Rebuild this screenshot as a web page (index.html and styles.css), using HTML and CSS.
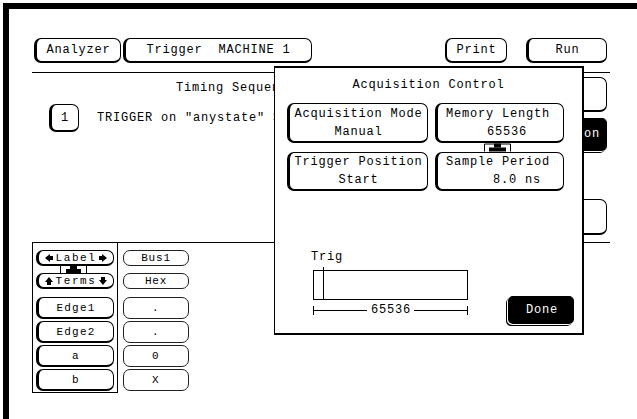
FILE: index.html
```html
<!DOCTYPE html>
<html lang="en">
<head>
    <meta charset="UTF-8">
    <title>Trigger MACHINE 1 - Acquisition Control</title>
    <link rel="stylesheet" href="styles.css">
</head>
<body>
<div class="screen">
    <div class="topbar">
        <div class="key w-analyzer">Analyzer</div>
        <div class="key w-machine">Trigger&nbsp; MACHINE 1</div>
        <div class="key w-print">Print</div>
        <div class="key w-run">Run</div>
    </div>
    <div class="rule"></div>

    <div class="middle">
        <div class="seq">
            <div class="seq-title">Timing Sequence Specification</div>
            <div class="seq-row">
                <div class="key w-level">1</div>
                <span class="seq-text">TRIGGER on "anystate" &gt;</span>
            </div>
        </div>
        <div class="side">
            <div class="key side-a"></div>
            <div class="key dark side-b">Acquisition</div>
            <div class="key side-c"></div>
        </div>
    </div>
    <div class="rule rule-low"></div>

    <div class="bottom">
        <div class="labels">
            <div class="key small wide"><svg class="arr" viewBox="0 0 8 8"><path d="M0 4 L5 0 L5 2 L8 2 L8 6 L5 6 L5 8 Z"/></svg>Label<svg class="arr" viewBox="0 0 8 8"><path d="M8 4 L3 0 L3 2 L0 2 L0 6 L3 6 L3 8 Z"/></svg></div>
            <div class="key small wide mt7"><svg class="arr" viewBox="0 0 8 8"><path d="M4 0 L8 5 L6 5 L6 8 L2 8 L2 5 L0 5 Z"/></svg>Terms<svg class="arr" viewBox="0 0 8 8"><path d="M4 8 L8 3 L6 3 L6 0 L2 0 L2 3 L0 3 Z"/></svg></div>
            <div class="key cell mt8">Edge1</div>
            <div class="key cell">Edge2</div>
            <div class="key cell">a</div>
            <div class="key cell">b</div>
            <svg class="knob knob-label" viewBox="0 0 27 8"><path class="knob-frame" d="M0.5 8 V0.5 H26.5 V8"/><rect x="10" y="1" width="7" height="3"/><rect x="6" y="4" width="15" height="4"/></svg>
        </div>
        <div class="values">
            <div class="key flat small">Bus1</div>
            <div class="key flat small mt7">Hex</div>
            <div class="key flat cell mt8">.</div>
            <div class="key flat cell">.</div>
            <div class="key flat cell">0</div>
            <div class="key flat cell">X</div>
        </div>
    </div>

    <!-- menu opened over the trigger screen -->
    <div class="dialog">
        <div class="dlg-title">Acquisition Control</div>
        <div class="dlg-grid">
            <div class="key pair">
                <span>Acquisition Mode</span>
                <span>Manual</span>
            </div>
            <div class="key pair right">
                <span>Memory Length</span>
                <span class="v-mem">65536</span>
            </div>
            <div class="key pair">
                <span>Trigger Position</span>
                <span>Start</span>
            </div>
            <div class="key pair right">
                <span>Sample Period</span>
                <span class="v-sample">8.0 ns</span>
            </div>
            <svg class="knob knob-mem" viewBox="0 0 27 10"><path class="knob-frame" d="M0.5 10 V2.5 H26.5 V10"/><rect x="10" y="2" width="7" height="4"/><rect x="5" y="6" width="17" height="4"/></svg>
        </div>
        <div class="dlg-bottom">
            <div class="trig">
                <div class="trig-label">Trig</div>
                <div class="trig-bar"><div class="trig-mark"></div></div>
                <div class="dim">
                    <div class="dim-line"></div>
                    <span class="dim-text">65536</span>
                    <div class="dim-line"></div>
                </div>
            </div>
            <div class="key dark done">Done</div>
        </div>
    </div>
</div>
</body>
</html>
```

FILE: styles.css
```css
*{margin: 0;padding: 0;box-sizing: border-box;}
body{background: #fff;color: #000;font-family: "Liberation Mono", "DejaVu Sans Mono", monospace;font-size: 12px;letter-spacing: 0.8px;}

.screen{position: relative;width: 634px;height: 416px;margin: 3px 0 0 3px;border-top: 6px solid #000;border-left: 6px solid #000;overflow: hidden;}

/* soft keys */
.key{display: flex;align-items: center;justify-content: center;background: #fff;border: 1px solid #000;border-left-width: 3px;border-bottom-width: 2px;border-radius: 7px;white-space: pre;line-height: 14px;}
.key.flat{border-width: 1px;border-color: #222;}
.key.dark{background: #000;color: #fff;border-radius: 5px;box-shadow: -1px 1px 0 #fff, -2px 2px 0 #000;}

.topbar{display: flex;margin: 29px 0 0 25px;width: 573px;height: 25px;}
.topbar .key{height: 25px;}
.w-analyzer{width: 87px;}
.w-machine{width: 189px;margin-left: 2px;}
.w-print{width: 62px;margin-left: auto;border-left-width: 2px;}
.w-run{width: 81px;margin-left: 19px;}

.rule{margin: 9px 0 0 23px;width: 578px;border-top: 1px solid #000;}
.rule-low{margin-top: 0;}

.middle{display: flex;height: 169px;}
.seq{flex: 1;white-space: nowrap;}
.seq-title{margin-top: 8px;padding-left: 167px;line-height: 14px;}
.seq-row{display: flex;align-items: center;margin: 9px 0 0 40px;}
.w-level{flex: none;width: 30px;height: 28px;}
.seq-text{margin-left: 18px;}

.side{display: flex;flex-direction: column;width: 102px;margin-right: 30px;padding-top: 4px;}
.side-a{height: 35px;}
.side-b{height: 33px;margin-top: 6px;justify-content: flex-end;padding-right: 6px;}
.side-c{height: 36px;margin-top: 48px;}

.bottom{display: flex;margin-left: 23px;}
.labels{position: relative;width: 86px;height: 150px;padding: 7px 3px 0 3px;border-left: 1px solid #000;border-right: 1px solid #000;border-bottom: 1px solid #000;}
.values{width: 66px;margin-left: 5px;padding-top: 7px;}
.small{height: 16px;font-size: 11px;}
.wide{letter-spacing: 1.6px;}
.cell{height: 22px;margin-top: 2px;font-size: 11px;letter-spacing: 1.2px;}
.mt7{margin-top: 7px;}
.mt8{margin-top: 8px;}
.arr{width: 8px;height: 8px;margin: 0 2px;fill: #000;}

.knob{position: absolute;display: block;}
.knob rect{fill: #000;}
.knob-frame{fill: #fff;stroke: #000;stroke-width: 1;}
.knob-label{left: 27px;top: 22px;width: 27px;height: 8px;}

/* acquisition dialog */
.dialog{position: absolute;left: 265px;top: 57px;width: 310px;height: 269px;background: #fff;border: 2px solid #000;border-left-width: 1px;display: flex;flex-direction: column;}
.dlg-title{margin-top: 10px;text-align: center;line-height: 14px;}
.dlg-grid{position: relative;display: grid;grid-template-columns: 141px 129px;grid-template-rows: 40px 39px;gap: 9px 7px;margin: 11px 0 0 12px;}
.pair{flex-direction: column;line-height: 18px;}
.pair.right{align-items: flex-start;padding-left: 8px;}
.v-mem{padding-left: 41px;}
.v-sample{padding-left: 47px;}
.knob-mem{left: 197px;top: 38px;width: 27px;height: 11px;}

.dlg-bottom{flex: 1;display: flex;align-items: flex-end;padding: 0 8px 7px 38px;}
.trig{width: 155px;padding-bottom: 11px;}
.trig-label{line-height: 14px;margin-left: -2px;}
.trig-bar{position: relative;height: 30px;margin-top: 6px;border: 1px solid #000;}
.trig-mark{position: absolute;left: 9px;top: -4px;height: 33px;border-left: 1px solid #000;}
.dim{display: flex;align-items: center;height: 9px;margin-top: 6px;border-left: 1px solid #000;border-right: 1px solid #000;}
.dim-line{flex: 1;border-top: 1px solid #000;}
.dim-text{padding: 0 3px 0 4px;line-height: 9px;}
.done{width: 66px;height: 28px;margin-left: auto;margin-bottom: 2px;}
```
